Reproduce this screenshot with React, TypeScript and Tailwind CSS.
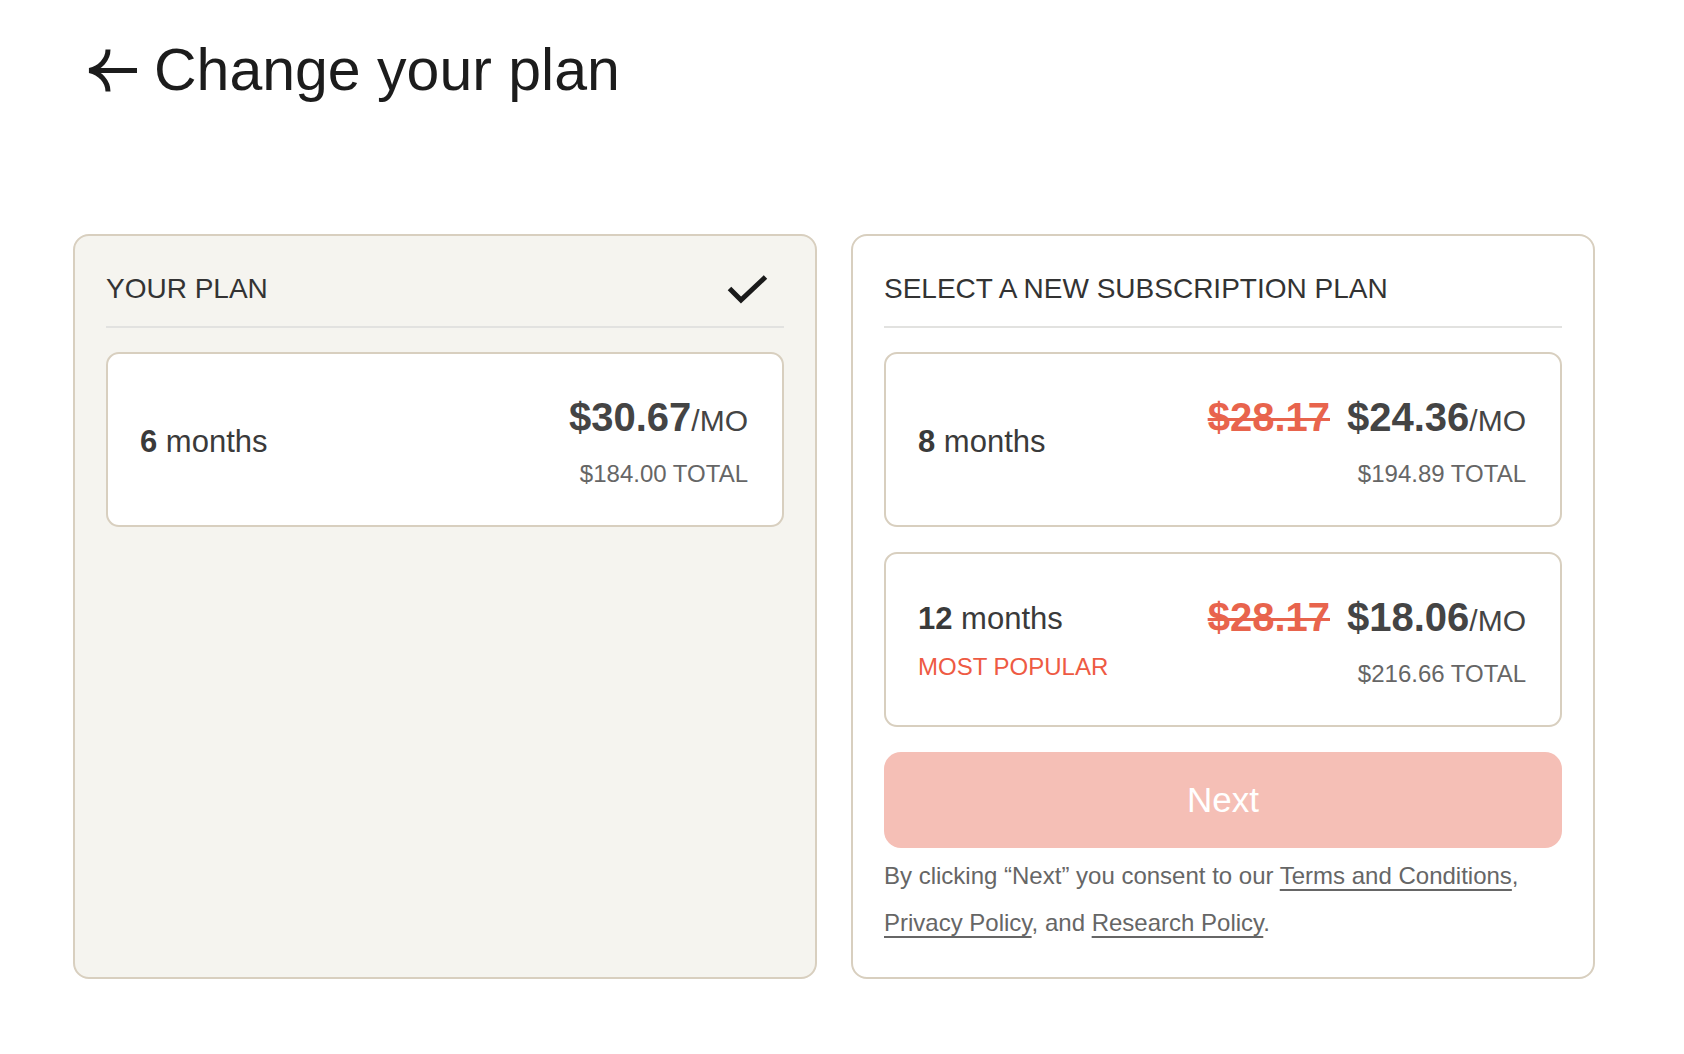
import React from "react";

type Plan = {
    months: number;
    oldPrice?: string;
    price: string;
    total: string;
    popular?: boolean;
};

const currentPlan: Plan = { months: 6, price: "$30.67", total: "$184.00" };

const newPlans: Plan[] = [
    { months: 8, oldPrice: "$28.17", price: "$24.36", total: "$194.89" },
    { months: 12, oldPrice: "$28.17", price: "$18.06", total: "$216.66", popular: true },
];

function BackArrow() {
    return (
        <svg width="50" height="43" viewBox="0 0 50 43" fill="none" className="shrink-0">
            <path d="M3 21.5 H49" stroke="#1c1c1c" strokeWidth="5" />
            <path
                d="M20 0.5 C20 10.5 12 19 1.5 21.5 C12 24 20 32.5 20 42.5"
                stroke="#1c1c1c"
                strokeWidth="5"
                fill="none"
            />
        </svg>
    );
}

function CheckMark() {
    return (
        <svg width="41" height="29" viewBox="0 0 41 29" fill="none" className="mr-[16px]">
            <path d="M2.5 13.5 L14 25 L38.5 2" stroke="#1a1a1a" strokeWidth="5" />
        </svg>
    );
}

function PlanCard({ plan }: { plan: Plan }) {
    return (
        <div className="flex h-[175px] items-center justify-between rounded-[13px] border-2 border-[#d8cfbf] bg-white pl-[32px] pr-[34px]">
            <div className={`flex flex-col ${plan.popular ? "mt-[4px]" : "mt-[4px]"}`}>
                <div className="text-[31px] leading-[36px] text-[#3a3a3a]">
                    <span className="font-bold">{plan.months}</span> months
                </div>
                {plan.popular && (
                    <div className="mt-[15px] text-[24px] leading-[30px] text-[#ee5a43]">
                        MOST POPULAR
                    </div>
                )}
            </div>
            <div className="mt-[2px] flex flex-col items-end">
                <div className="flex items-baseline leading-[48px]">
                    {plan.oldPrice && (
                        <span className="mr-[17px] text-[40px] font-bold text-[#e8644d] line-through decoration-[3px]">
                            {plan.oldPrice}
                        </span>
                    )}
                    <span className="text-[40px] font-bold text-[#444444]">{plan.price}</span>
                    <span className="text-[30px] text-[#444444]">/MO</span>
                </div>
                <div className="mt-[14px] text-[24px] leading-[30px] text-[#666666]">
                    {plan.total} TOTAL
                </div>
            </div>
        </div>
    );
}

function CardHeader({ title, done }: { title: string; done?: boolean }) {
    return (
        <div className="flex items-center justify-between border-b-2 border-[#e2e2e0] pb-[17px]">
            <h2 className="text-[28px] leading-[40px] text-[#333333]">{title}</h2>
            {done && <CheckMark />}
        </div>
    );
}

export default function App() {
    return (
        <main className="min-h-screen bg-white px-[73px] pt-[40px] pb-[66px] font-['Liberation_Sans',Arial,sans-serif]">
            <header className="flex items-center gap-[16px] pl-[15px]">
                <BackArrow />
                <h1 className="text-[59px] leading-[60px] text-[#1c1c1c]">Change your plan</h1>
            </header>

            <section className="mt-[134px] grid grid-cols-[744px_744px] gap-[34px]">
                <div className="rounded-[16px] border-2 border-[#d8cfbf] bg-[#f5f4ef] px-[31px] pt-[33px] pb-[32px]">
                    <CardHeader title="YOUR PLAN" done />
                    <div className="mt-[24px]">
                        <PlanCard plan={currentPlan} />
                    </div>
                </div>

                <div className="rounded-[16px] border-2 border-[#d8cfbf] bg-white px-[31px] pt-[33px] pb-[31px]">
                    <CardHeader title="SELECT A NEW SUBSCRIPTION PLAN" />
                    <div className="mt-[24px] flex flex-col gap-[25px]">
                        {newPlans.map((plan) => (
                            <PlanCard key={plan.months} plan={plan} />
                        ))}
                    </div>
                    <button className="mt-[25px] flex h-[96px] w-full items-center justify-center rounded-[17px] bg-[#f5bfb6] text-[35px] text-white">
                        Next
                    </button>
                    <p className="mt-[4px] text-[24px] leading-[47px] text-[#666666]">
                        By clicking “Next” you consent to our{" "}
                        <a className="underline decoration-[2px] underline-offset-[5px]">Terms and Conditions</a>,{" "}
                        <a className="underline decoration-[2px] underline-offset-[5px]">Privacy Policy</a>, and{" "}
                        <a className="underline decoration-[2px] underline-offset-[5px]">Research Policy</a>.
                    </p>
                </div>
            </section>
        </main>
    );
}
